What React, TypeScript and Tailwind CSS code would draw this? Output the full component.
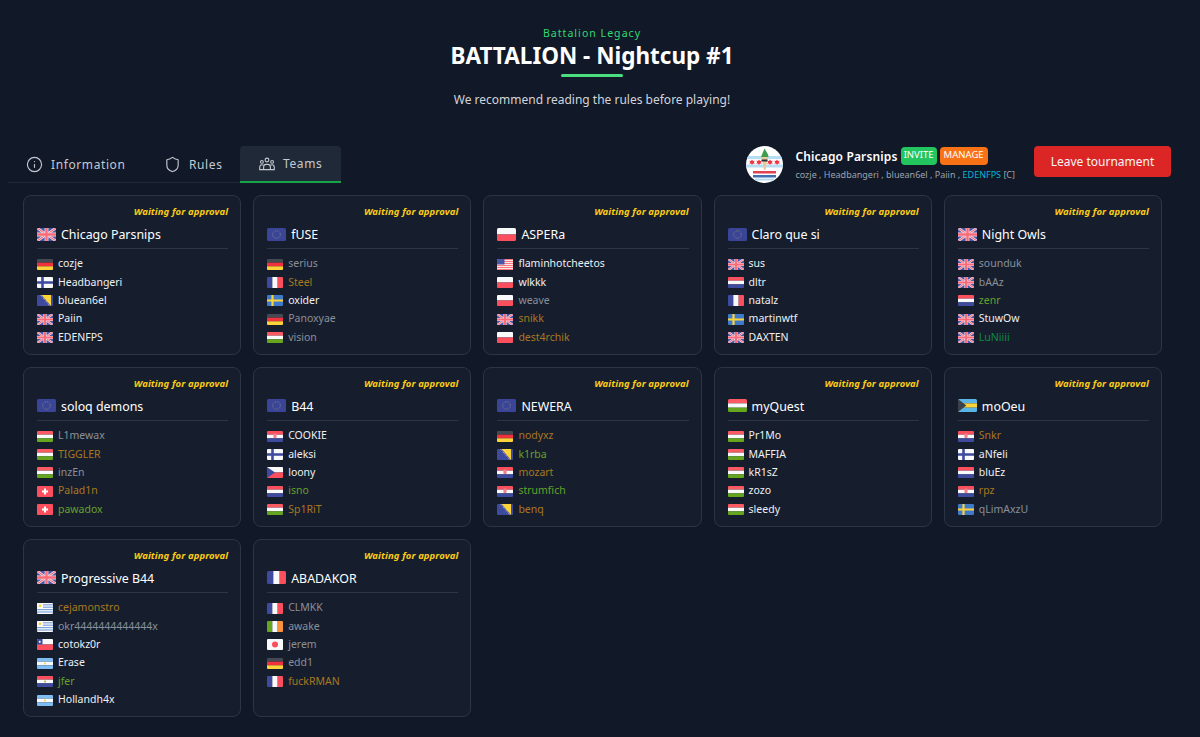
import { Info, Shield } from "lucide-react";

type C = "w" | "g" | "a" | "l" | "d";
type P = [string, string, C];
type T = { flag: string; name: string; players: P[] };

const teams: T[] = [
  { flag: "gb", name: "Chicago Parsnips", players: [["de", "cozje", "w"], ["fi", "Headbangeri", "w"], ["ba", "bluean6el", "w"], ["gb", "Paiin", "w"], ["gb", "EDENFPS", "w"]] },
  { flag: "eu", name: "fUSE", players: [["de", "serius", "g"], ["fr", "Steel", "a"], ["se", "oxider", "w"], ["de", "Panoxyae", "g"], ["hu", "vision", "g"]] },
  { flag: "pl", name: "ASPERa", players: [["us", "flaminhotcheetos", "w"], ["pl", "wlkkk", "w"], ["pl", "weave", "g"], ["gb", "snikk", "a"], ["pl", "dest4rchik", "a"]] },
  { flag: "eu", name: "Claro que si", players: [["gb", "sus", "w"], ["nl", "dltr", "w"], ["fr", "natalz", "w"], ["se", "martinwtf", "w"], ["gb", "DAXTEN", "w"]] },
  { flag: "gb", name: "Night Owls", players: [["gb", "sounduk", "g"], ["gb", "bAAz", "g"], ["nl", "zenr", "l"], ["gb", "StuwOw", "w"], ["gb", "LuNiiii", "d"]] },
  { flag: "eu", name: "soloq demons", players: [["hu", "L1mewax", "g"], ["hu", "TIGGLER", "a"], ["hu", "inzEn", "g"], ["ch", "Palad1n", "a"], ["ch", "pawadox", "l"]] },
  { flag: "eu", name: "B44", players: [["hr", "COOKIE", "w"], ["fi", "aleksi", "w"], ["cz", "loony", "w"], ["nl", "isno", "l"], ["hu", "Sp1RiT", "a"]] },
  { flag: "eu", name: "NEWERA", players: [["de", "nodyxz", "a"], ["ba", "k1rba", "l"], ["hr", "mozart", "a"], ["hr", "strumfich", "l"], ["ba", "benq", "a"]] },
  { flag: "hu", name: "myQuest", players: [["hu", "Pr1Mo", "w"], ["hu", "MAFFIA", "w"], ["hu", "kR1sZ", "w"], ["hu", "zozo", "w"], ["hu", "sleedy", "w"]] },
  { flag: "bs", name: "moOeu", players: [["hr", "Snkr", "a"], ["fi", "aNfeli", "w"], ["nl", "bluEz", "w"], ["hr", "rpz", "a"], ["se", "qLimAxzU", "g"]] },
  { flag: "gb", name: "Progressive B44", players: [["uy", "cejamonstro", "a"], ["uy", "okr4444444444444x", "g"], ["cl", "cotokz0r", "w"], ["ar", "Erase", "w"], ["py", "jfer", "l"], ["ar", "Hollandh4x", "w"]] },
  { flag: "fr", name: "ABADAKOR", players: [["fr", "CLMKK", "g"], ["ie", "awake", "g"], ["jp", "jerem", "g"], ["de", "edd1", "g"], ["fr", "fuckRMAN", "a"]] },
];

const colors: Record<C, string> = {
  w: "text-[#eef0f3]",
  g: "text-[#8a8f98]",
  a: "text-[#a8781f]",
  l: "text-[#65a02a]",
  d: "text-[#0f8a3f]",
};

const R = "#fb4f5e";
const B = "#3d4a9e";
const L = "#3f79c9";
const Y = "#fcd43a";

function FlagArt({ code }: { code: string }) {
  const h = (a: string, b: string, c: string) => (
    <>
      <rect width="16" height="3.67" fill={a} />
      <rect y="3.67" width="16" height="3.67" fill={b} />
      <rect y="7.33" width="16" height="3.67" fill={c} />
    </>
  );
  const v = (a: string, b: string, c: string) => (
    <>
      <rect width="5.33" height="11" fill={a} />
      <rect x="5.33" width="5.33" height="11" fill={b} />
      <rect x="10.67" width="5.33" height="11" fill={c} />
    </>
  );
  switch (code) {
    case "gb":
      return (
        <>
          <rect width="16" height="11" fill="#4a56a6" />
          <path d="M0 0L16 11M16 0L0 11" stroke="#f4d8e0" strokeWidth="2.2" />
          <path d="M0 0L16 11M16 0L0 11" stroke={R} strokeWidth="0.8" />
          <path d="M8 0V11M0 5.5H16" stroke="#f4d8e0" strokeWidth="3.2" />
          <path d="M8 0V11M0 5.5H16" stroke="#fb6a78" strokeWidth="2" />
        </>
      );
    case "de":
      return h("#444a52", "#f0323c", Y);
    case "fi":
      return (
        <>
          <rect width="16" height="11" fill="#f8f9fb" />
          <path d="M5.5 0V11M0 5.5H16" stroke={B} strokeWidth="2.6" />
        </>
      );
    case "ba":
      return (
        <>
          <rect width="16" height="11" fill={B} />
          <path d="M4.5 0H14V11Z" fill={Y} />
          <path d="M3.5 0L13 11" stroke="#d8daea" strokeWidth="0.8" strokeDasharray="1 1" />
        </>
      );
    case "eu":
      return (
        <>
          <rect width="16" height="11" fill="#3a4598" />
          <circle cx="8" cy="5.5" r="3.2" fill="none" stroke="#8e8a72" strokeWidth="0.8" strokeDasharray="0.8 0.87" />
        </>
      );
    case "fr":
      return v(B, "#f8f9fb", R);
    case "se":
      return (
        <>
          <rect width="16" height="11" fill={L} />
          <path d="M5.5 0V11M0 5.5H16" stroke={Y} strokeWidth="2.2" />
        </>
      );
    case "hu":
      return h("#fb5a62", "#f8f9fb", "#66a61e");
    case "pl":
      return (
        <>
          <rect width="16" height="5.5" fill="#f8f9fb" />
          <rect y="5.5" width="16" height="5.5" fill={R} />
        </>
      );
    case "us":
      return (
        <>
          <rect width="16" height="11" fill="#fde6e6" />
          {[0, 2, 4, 6, 8, 10].map((y) => (
            <rect key={y} y={y} width="16" height="1" fill="#fb7a82" />
          ))}
          <rect width="7.5" height="5.5" fill="#4a56a6" />
        </>
      );
    case "nl":
      return h(R, "#f8f9fb", B);
    case "hr":
      return (
        <>
          {h(R, "#f8f9fb", B)}
          <rect x="6.4" y="2.6" width="3.2" height="4.4" rx="0.8" fill="#f47f88" />
        </>
      );
    case "cz":
      return (
        <>
          <rect width="16" height="5.5" fill="#f8f9fb" />
          <rect y="5.5" width="16" height="5.5" fill={R} />
          <path d="M0 0L8 5.5L0 11Z" fill={B} />
        </>
      );
    case "ch":
      return (
        <>
          <rect width="16" height="11" fill={R} />
          <path d="M8 2.5V8.5M5 5.5H11" stroke="#fff" strokeWidth="2" />
        </>
      );
    case "bs":
      return (
        <>
          {h("#5ab4e6", Y, "#5ab4e6")}
          <path d="M0 0L7 5.5L0 11Z" fill="#3c4048" />
        </>
      );
    case "uy":
      return (
        <>
          <rect width="16" height="11" fill="#f8f9fb" />
          {[1.2, 3.6, 6, 8.4].map((y) => (
            <rect key={y} y={y} width="16" height="1.2" fill="#7fa6db" />
          ))}
          <rect width="6" height="5.5" fill="#f8f9fb" />
          <circle cx="3" cy="2.8" r="1.4" fill={Y} />
        </>
      );
    case "cl":
      return (
        <>
          <rect width="16" height="5.5" fill="#f8f9fb" />
          <rect y="5.5" width="16" height="5.5" fill={R} />
          <rect width="5.5" height="5.5" fill={B} />
          <circle cx="2.75" cy="2.75" r="1" fill="#fff" />
        </>
      );
    case "ar":
      return (
        <>
          {h("#7fbcf2", "#f8f9fb", "#7fbcf2")}
          <circle cx="8" cy="5.5" r="1" fill={Y} />
        </>
      );
    case "py":
      return (
        <>
          {h(R, "#f8f9fb", "#3d4a9e")}
          <circle cx="8" cy="5.5" r="1" fill="#c9a34a" />
        </>
      );
    case "ie":
      return v("#66a61e", "#f8f9fb", "#fb923c");
    case "jp":
      return (
        <>
          <rect width="16" height="11" fill="#f8f9fb" />
          <circle cx="8" cy="5.5" r="3" fill={R} />
        </>
      );
    default:
      return null;
  }
}

function Flag({ code, big }: { code: string; big?: boolean }) {
  return (
    <svg
      viewBox="0 0 16 11"
      preserveAspectRatio="none"
      className={big ? "mb-[2px] h-[13px] w-[19px] shrink-0 rounded-[1.5px]" : "h-[11px] w-[16px] shrink-0 rounded-[1px]"}
    >
      <FlagArt code={code} />
    </svg>
  );
}

function TeamsIcon() {
  return (
    <svg viewBox="0 0 16 14" className="h-[14px] w-[16px] shrink-0" fill="none" stroke="currentColor" strokeWidth="1.1">
      <circle cx="8" cy="3" r="1.9" />
      <circle cx="2.9" cy="4.9" r="1.4" />
      <circle cx="13.1" cy="4.9" r="1.4" />
      <path d="M4.6 12.6V10.2C4.6 8.6 5.8 7.4 7.2 7.4H8.8C10.2 7.4 11.4 8.6 11.4 10.2V12.6" />
      <path d="M4.4 8.2C3.6 7.7 2.7 7.6 2 7.9C1.1 8.3 0.7 9.2 0.7 10.2V12.6H15.3V10.2C15.3 9.2 14.9 8.3 14 7.9C13.3 7.6 12.4 7.7 11.6 8.2" />
    </svg>
  );
}

function Avatar() {
  const star = (x: number) => (
    <path
      key={x}
      transform={`translate(${x} 0)`}
      d="M0 13.5l1 1.6 1.8-.3-1 1.5 1 1.5-1.8-.3-1 1.6-1-1.6-1.8.3 1-1.5-1-1.5 1.8.3z"
      fill="#ef3340"
    />
  );
  return (
    <svg viewBox="0 0 37 37" className="h-[37px] w-[37px] shrink-0 rounded-full">
      <rect width="37" height="37" fill="#fff" />
      <rect y="10" width="37" height="3" fill="#b7ddf2" />
      <rect y="18.5" width="37" height="3" fill="#b7ddf2" />
      {[6, 13, 24, 31].map(star)}
      <path d="M15 11L18.5 2.5L22 8.5L22.5 11Z" fill="#3f9d4b" />
      <path d="M15.5 11H22L19.5 24H18Z" fill="#e8c9a0" />
      <rect x="15.5" y="13.5" width="6" height="2" fill="#26303a" />
      <rect x="7" y="25" width="23" height="2.5" fill="#e04450" />
      <rect x="7" y="29" width="23" height="2.5" fill="#3f6fb5" />
      <rect x="9" y="32.5" width="19" height="2" fill="#b7ddf2" />
    </svg>
  );
}

function TeamCard({ team }: { team: T }) {
  return (
    <div className="rounded-lg border border-[#2a3648] bg-[#161e2e] pt-[9px] pr-[12px] pb-[7px] pl-[13px]">
      <div className="text-right text-[9.5px] leading-[14px] font-bold tracking-[0.1px] text-[#facc15] italic">Waiting for approval</div>
      <div className="mt-[7px] flex h-[18px] items-center gap-[5px] text-[12.4px] text-white">
        <Flag code={team.flag} big />
        <span>{team.name}</span>
      </div>
      <div className="mt-[4px] mb-[6px] h-px bg-[#2b3646]" />
      <div>
        {team.players.map(([flag, name, c]) => (
          <div key={name} className={`flex h-[18.4px] items-center gap-[5px] text-[10.5px] ${colors[c]}`}>
            <Flag code={flag} />
            <span>{name}</span>
          </div>
        ))}
      </div>
    </div>
  );
}

export default function App() {
  return (
    <div className="min-h-[737px] bg-[#111827] pb-[19px] text-white" style={{ fontFamily: '"Noto Sans", sans-serif' }}>
      <header className="flex flex-col items-center pt-[26px] pr-[16px]">
        <div className="text-[10.5px] leading-[14px] tracking-widest text-[#33d873]">Battalion Legacy</div>
        <h1 className="text-[22.5px] leading-[32px] font-bold">BATTALION - Nightcup #1</h1>
        <div className="mt-[2px] h-[3px] w-[62px] rounded-full bg-[#4ade80]" />
        <p className="mt-[14px] text-[12px] leading-[17px] text-[#d1d5db]">We recommend reading the rules before playing!</p>
      </header>

      <div className="mt-[38px] flex items-start justify-between pr-[29px] pl-[8px]">
        <nav className="flex h-[37px] border-b border-[#1f2937] pt-[1px] text-[12px] tracking-wider text-[#c4c9d1]">
          <div className="flex w-[128px] items-center gap-[8px] pl-[18px]">
            <Info size={17} strokeWidth={1.6} />
            <span>Information</span>
          </div>
          <div className="flex w-[104px] items-center gap-[8px] pl-[28px]">
            <Shield size={17} strokeWidth={1.6} />
            <span>Rules</span>
          </div>
          <div className="-mt-[1px] -mb-px flex w-[101px] items-center gap-[8px] rounded-t border-b-2 border-[#16a34a] bg-[#1f2937] pl-[19px]">
            <TeamsIcon />
            <span>Teams</span>
          </div>
        </nav>

        <div className="flex items-start">
          <Avatar />
          <div className="ml-[12px]">
            <div className="flex h-[19px] items-center gap-[3px]">
              <span className="pt-[2px] text-[12px] font-semibold tracking-[0.15px] text-white">Chicago Parsnips</span>
              <span className="flex h-[18px] w-[36px] items-center justify-center rounded-sm bg-[#22c55e] text-[9.5px] text-white">INVITE</span>
              <span className="flex h-[18px] w-[48px] items-center justify-center rounded-sm bg-[#f97316] text-[9.5px] text-white">MANAGE</span>
            </div>
            <div className="mt-[3px] text-[9px] leading-[14px] text-[#9ca3af]">
              cozje , Headbangeri , bluean6el , Paiin , <span className="text-[#06b6d4]">EDENFPS</span> [C]
            </div>
          </div>
          <button className="ml-[19px] h-[31px] w-[137px] rounded-sm bg-[#dc2626] text-[12px] text-[#f3f4f6]">Leave tournament</button>
        </div>
      </div>

      <main className="mt-[12px] grid grid-cols-5 gap-3 pr-[38px] pl-[23px]">
        {teams.map((t) => (
          <TeamCard key={t.name} team={t} />
        ))}
      </main>
    </div>
  );
}
